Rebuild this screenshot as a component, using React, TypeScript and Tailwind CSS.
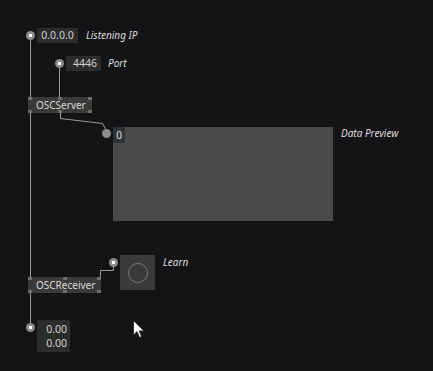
import type { ReactNode } from "react";

// vvvv style patch: each node group is placed once on the canvas, its parts flow in a row

function Pin({ dot = true, className = "" }: { dot?: boolean; className?: string }) {
  return (
    <div className={`flex h-[9px] w-[9px] shrink-0 items-center justify-center rounded-full bg-[#8c8c8c] ${className}`}>
      {dot && <div className="h-[3px] w-[3px] bg-white" />}
    </div>
  );
}

function Label({ children, className = "" }: { children: ReactNode; className?: string }) {
  return <div className={`text-[10px] italic leading-none text-[#dcdcdc] ${className}`}>{children}</div>;
}

function PinRow({ className }: { className: string }) {
  return (
    <div className={`absolute inset-x-0 flex justify-between ${className}`}>
      <div className="h-[3px] w-[4px] bg-[#6e6e6e]" />
      <div className="h-[3px] w-[4px] bg-[#6e6e6e]" />
      <div className="h-[3px] w-[4px] bg-[#6e6e6e]" />
    </div>
  );
}

function Node({ title, className }: { title: string; className: string }) {
  return (
    <div className={`absolute flex h-4 items-center bg-[#3a3a3a] pl-2 text-[10px] leading-none text-[#d8d8d8] ${className}`}>
      {title}
      <PinRow className="top-0" />
      <PinRow className="bottom-0" />
    </div>
  );
}

const box = "bg-[#2c2c2c] text-[10.5px] text-[#cfcfcf]";

export default function App() {
  return (
    <div className="relative h-[371px] w-[433px] overflow-hidden bg-[#141416] font-['Noto_Sans','Open_Sans',sans-serif]">
      <svg className="absolute inset-0" width={433} height={371}>
        <g stroke="#9a9a9a" strokeWidth={1} fill="none">
          <line x1={30.5} y1={39} x2={30.5} y2={323} />
          <line x1={59.5} y1={67} x2={59.5} y2={97} />
          <polyline points="60.5,113 60.5,118.5 102.5,123.5 105.5,129" />
          <polyline points="113.5,266 113.5,270.5 100.5,270.5 100.5,277" />
        </g>
        {/* cursor */}
        <path
          d="M133.5 320.5 L133.5 335 L137 331.6 L139.6 337.5 L141.6 336.6 L139.1 330.9 L143.8 330.9 Z"
          fill="#fff"
          stroke="#222"
          strokeWidth={0.8}
        />
      </svg>

      {/* Listening IP */}
      <div className="absolute left-[26px] top-[28px] flex items-center gap-[2px]">
        <Pin />
        <div className={`flex h-[15px] w-[41px] items-center justify-center ${box}`}>0.0.0.0</div>
        <Label className="ml-[6px] -mt-px">Listening IP</Label>
      </div>

      {/* Port */}
      <div className="absolute left-[55px] top-[56px] flex items-center gap-[2px]">
        <Pin />
        <div className={`flex h-[15px] w-[35px] items-center justify-end pr-[4px] ${box}`}>4446</div>
        <Label className="ml-[5px] -mt-px">Port</Label>
      </div>

      <Node title="OSCServer" className="left-[28px] top-[97px] w-[64px]" />

      {/* Data Preview */}
      <div className="absolute left-[102px] top-[127px] flex items-start gap-[2px]">
        <Pin dot={false} className="mt-[2px]" />
        <div className="h-[94px] w-[220px] bg-[#4a4a4a]">
          <div className="flex h-4 w-3 items-center justify-center bg-[#2f3236] text-[10px] leading-none text-[#e0e0e0]">0</div>
        </div>
        <Label className="ml-[6px] mt-px">Data Preview</Label>
      </div>

      {/* Learn */}
      <div className="absolute left-[109px] top-[255px] flex items-start gap-[2px]">
        <Pin className="mt-[3px]" />
        <div className="flex h-[35px] w-[35px] items-center justify-center bg-[#3a3a3a]">
          <div className="h-[20px] w-[20px] rounded-full border border-[#7a7a7a]" />
        </div>
        <Label className="ml-[6px] mt-[2px]">Learn</Label>
      </div>

      <Node title="OSCReceiver" className="left-[28px] top-[277px] w-[73px]" />

      {/* output */}
      <div className="absolute left-[26px] top-[320px] flex items-start gap-[2px]">
        <Pin className="mt-[3px]" />
        <div className={`flex w-[33px] flex-col items-end py-[2px] pr-[3px] leading-[14px] ${box}`}>
          <span>0.00</span>
          <span>0.00</span>
        </div>
      </div>
    </div>
  );
}
